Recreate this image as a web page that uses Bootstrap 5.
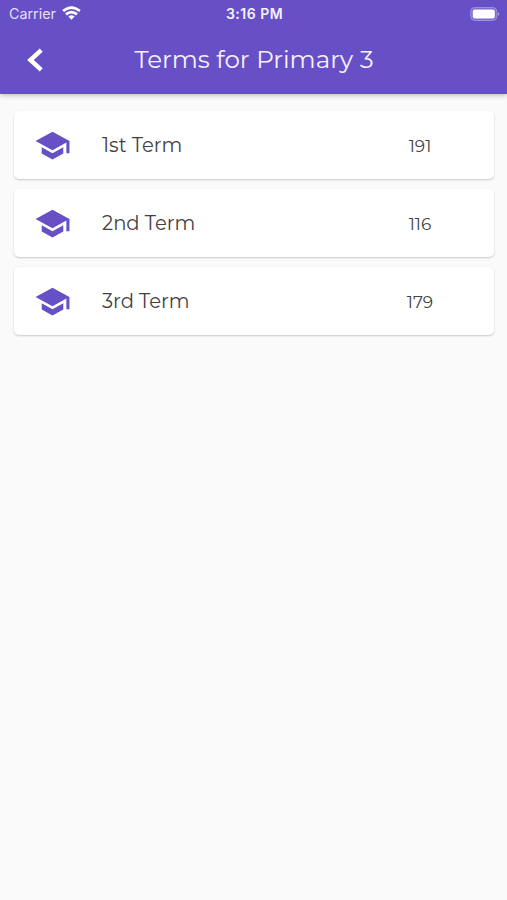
<!DOCTYPE html>
<html lang="en">
<head>
<meta charset="utf-8">
<meta name="viewport" content="width=device-width, initial-scale=1">
<title>Terms for Primary 3</title>
<link href="https://cdn.jsdelivr.net/npm/bootstrap@5.3.0/dist/css/bootstrap.min.css" rel="stylesheet">
<style>
body{background:#fafafa;font-family:Montserrat,Inter,sans-serif;min-height:100vh}
svg{display:block;flex:none}
.app-header{background:#6750c6;height:94px;color:#f6f2ff;box-shadow:0 1px 5px rgba(0,0,0,.28)}
.status-bar{height:27px;padding:0 7px 0 9px;font:400 14.3px/27px Inter,sans-serif}
.status-bar>*{flex:1 1 0}
.carrier{color:#e6dffa}
.clock{font-weight:600;font-size:14px;letter-spacing:.5px}
.wifi{margin:0 0 1px 6px}
.title-bar{height:66px;padding:0 27px}
.title-bar h1{font-size:24.6px;font-weight:400;line-height:64px;height:66px;padding-right:15px}
.term-list{padding:17px 13px 0 14px;gap:10px}
.term-card{height:68px;border:0;border-radius:5px;box-shadow:0 1px 2px rgba(0,0,0,.2);padding:0 20px;color:#424242}
.term-name{font-size:19.6px;margin-left:31px;padding-top:2px}
.term-count{font-size:16.9px;width:60px;margin-right:24px;padding-top:4px}
</style>
<script src="https://cdn.jsdelivr.net/npm/bootstrap@5.3.0/dist/js/bootstrap.bundle.min.js"></script>
</head>
<body>
<svg width="0" height="0" class="d-none"><symbol id="school" viewBox="0 0 24 24"><path fill="#6750c6" d="M5 13.18v4L12 21l7-3.82v-4L12 17l-7-3.82zM12 3L1 9l11 6 9-4.91V17h2V9L12 3z"/></symbol></svg>
<header class="app-header">
  <div class="status-bar d-flex align-items-center">
    <div class="d-flex align-items-center"><span class="carrier">Carrier</span>
      <svg class="wifi" width="19" height="14" viewBox="0 0 19 14" fill="none" stroke="#fff" stroke-width="2.7"><path d="M1.1 5Q9.5-1.9 17.9 5M4 8.4Q9.5 3.7 15 8.4"/><path d="M6.4 10.6Q9.5 8 12.6 10.6L9.5 13.7Z" fill="#fff" stroke="none"/></svg>
    </div>
    <div class="clock text-center">3:16 PM</div>
    <div class="d-flex justify-content-end">
      <svg width="30" height="14" viewBox="0 0 30 14"><rect x=".8" y=".6" width="26" height="12.8" rx="3.8" fill="#7c68ce" stroke="#a195de" stroke-width="1"/><rect x="2.8" y="2.4" width="22" height="9.2" rx="1.8" fill="#fff"/><path d="M27.9 5Q30.9 7 27.9 9Z" fill="#a99be0"/></svg>
    </div>
  </div>
  <div class="title-bar d-flex align-items-center">
    <svg width="16" height="25" viewBox="0 0 16 25"><path d="M14.2 2.2L3.4 12 14.2 21.8" fill="none" stroke="#fff" stroke-width="4.4"/></svg>
    <h1 class="m-0 flex-grow-1 text-center">Terms for Primary 3</h1>
  </div>
</header>
<main class="term-list d-flex flex-column">
  <div class="card term-card flex-row align-items-center"><svg width="37" height="37"><use href="#school"/></svg><span class="term-name">1st Term</span><span class="term-count ms-auto text-center">191</span></div>
  <div class="card term-card flex-row align-items-center"><svg width="37" height="37"><use href="#school"/></svg><span class="term-name">2nd Term</span><span class="term-count ms-auto text-center">116</span></div>
  <div class="card term-card flex-row align-items-center"><svg width="37" height="37"><use href="#school"/></svg><span class="term-name">3rd Term</span><span class="term-count ms-auto text-center">179</span></div>
</main>
</body>
</html>
